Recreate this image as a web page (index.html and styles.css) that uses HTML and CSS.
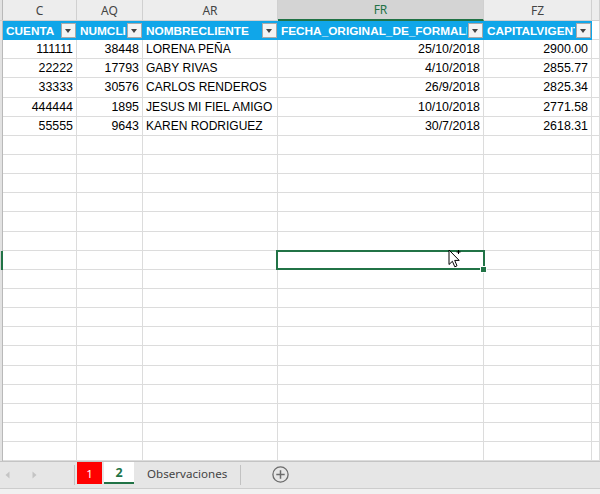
FILE: index.html
```html
<!DOCTYPE html>
<html lang="es">
<head>
    <meta charset="UTF-8">
    <meta name="viewport" content="width=device-width, initial-scale=1.0">
    <title>Libro1 - Excel</title>
    <link rel="stylesheet" href="styles.css">
</head>
<body>

    <div class="sheet">

        <!-- Column letters -->
        <div class="colheads">
            <div class="corner"></div>
            <div class="ch">C</div>
            <div class="ch">AQ</div>
            <div class="ch">AR</div>
            <div class="ch ch-active">FR</div>
            <div class="ch">FZ</div>
            <div class="ch"></div>
        </div>

        <!-- Cells -->
        <div class="grid">
            <div class="row">
                <div class="rh"></div>
                <div class="th"><span class="th-text">CUENTA</span><span class="filter"></span></div>
                <div class="th"><span class="th-text">NUMCLIENTE</span><span class="filter"></span></div>
                <div class="th"><span class="th-text">NOMBRECLIENTE</span><span class="filter"></span></div>
                <div class="th"><span class="th-text">FECHA_ORIGINAL_DE_FORMALIZACION</span><span class="filter"></span></div>
                <div class="th"><span class="th-text">CAPITALVIGENTE</span><span class="filter"></span></div>
                <div class="cell"></div>
            </div>
            <div class="row">
                <div class="rh"></div>
                <div class="cell num">111111</div>
                <div class="cell num">38448</div>
                <div class="cell">LORENA PEÑA</div>
                <div class="cell num">25/10/2018</div>
                <div class="cell num">2900.00</div>
                <div class="cell"></div>
            </div>
            <div class="row">
                <div class="rh"></div>
                <div class="cell num">22222</div>
                <div class="cell num">17793</div>
                <div class="cell">GABY RIVAS</div>
                <div class="cell num">4/10/2018</div>
                <div class="cell num">2855.77</div>
                <div class="cell"></div>
            </div>
            <div class="row">
                <div class="rh"></div>
                <div class="cell num">33333</div>
                <div class="cell num">30576</div>
                <div class="cell">CARLOS RENDEROS</div>
                <div class="cell num">26/9/2018</div>
                <div class="cell num">2825.34</div>
                <div class="cell"></div>
            </div>
            <div class="row">
                <div class="rh"></div>
                <div class="cell num">444444</div>
                <div class="cell num">1895</div>
                <div class="cell">JESUS MI FIEL AMIGO</div>
                <div class="cell num">10/10/2018</div>
                <div class="cell num">2771.58</div>
                <div class="cell"></div>
            </div>
            <div class="row">
                <div class="rh"></div>
                <div class="cell num">55555</div>
                <div class="cell num">9643</div>
                <div class="cell">KAREN RODRIGUEZ</div>
                <div class="cell num">30/7/2018</div>
                <div class="cell num">2618.31</div>
                <div class="cell"></div>
            </div>
            <div class="row"><div class="rh"></div><div class="cell"></div><div class="cell"></div><div class="cell"></div><div class="cell"></div><div class="cell"></div><div class="cell"></div></div>
            <div class="row"><div class="rh"></div><div class="cell"></div><div class="cell"></div><div class="cell"></div><div class="cell"></div><div class="cell"></div><div class="cell"></div></div>
            <div class="row"><div class="rh"></div><div class="cell"></div><div class="cell"></div><div class="cell"></div><div class="cell"></div><div class="cell"></div><div class="cell"></div></div>
            <div class="row"><div class="rh"></div><div class="cell"></div><div class="cell"></div><div class="cell"></div><div class="cell"></div><div class="cell"></div><div class="cell"></div></div>
            <div class="row"><div class="rh"></div><div class="cell"></div><div class="cell"></div><div class="cell"></div><div class="cell"></div><div class="cell"></div><div class="cell"></div></div>
            <div class="row"><div class="rh"></div><div class="cell"></div><div class="cell"></div><div class="cell"></div><div class="cell"></div><div class="cell"></div><div class="cell"></div></div>
            <!-- Active row -->
            <div class="row">
                <div class="rh rh-active"></div>
                <div class="cell"></div>
                <div class="cell"></div>
                <div class="cell"></div>
                <div class="cell selected">
                    <svg class="cursor" width="14" height="20" viewBox="0 0 14 20">
                        <path d="M1 1 L1 15.5 L4.4 12.3 L6.8 17.8 L9 16.8 L6.7 11.4 L11.2 11.4 Z" fill="#fff" stroke="#000" stroke-width="1"/>
                        <path d="M10.5 1 V5 M8.5 3 H12.5" stroke="#000" stroke-width="1"/>
                    </svg>
                </div>
                <div class="cell"></div>
                <div class="cell"></div>
            </div>
            <div class="row"><div class="rh"></div><div class="cell"></div><div class="cell"></div><div class="cell"></div><div class="cell"></div><div class="cell"></div><div class="cell"></div></div>
            <div class="row"><div class="rh"></div><div class="cell"></div><div class="cell"></div><div class="cell"></div><div class="cell"></div><div class="cell"></div><div class="cell"></div></div>
            <div class="row"><div class="rh"></div><div class="cell"></div><div class="cell"></div><div class="cell"></div><div class="cell"></div><div class="cell"></div><div class="cell"></div></div>
            <div class="row"><div class="rh"></div><div class="cell"></div><div class="cell"></div><div class="cell"></div><div class="cell"></div><div class="cell"></div><div class="cell"></div></div>
            <div class="row"><div class="rh"></div><div class="cell"></div><div class="cell"></div><div class="cell"></div><div class="cell"></div><div class="cell"></div><div class="cell"></div></div>
            <div class="row"><div class="rh"></div><div class="cell"></div><div class="cell"></div><div class="cell"></div><div class="cell"></div><div class="cell"></div><div class="cell"></div></div>
            <div class="row"><div class="rh"></div><div class="cell"></div><div class="cell"></div><div class="cell"></div><div class="cell"></div><div class="cell"></div><div class="cell"></div></div>
            <div class="row"><div class="rh"></div><div class="cell"></div><div class="cell"></div><div class="cell"></div><div class="cell"></div><div class="cell"></div><div class="cell"></div></div>
            <div class="row"><div class="rh"></div><div class="cell"></div><div class="cell"></div><div class="cell"></div><div class="cell"></div><div class="cell"></div><div class="cell"></div></div>
            <div class="row"><div class="rh"></div><div class="cell"></div><div class="cell"></div><div class="cell"></div><div class="cell"></div><div class="cell"></div><div class="cell"></div></div>
        </div>

        <!-- Sheet tabs -->
        <div class="tabbar">
            <div class="nav">
                <svg width="5" height="8" viewBox="0 0 5 8"><path d="M4.5 0.5 L0.5 4 L4.5 7.5 Z" fill="#c4c4c4"/></svg>
                <svg width="5" height="8" viewBox="0 0 5 8"><path d="M0.5 0.5 L4.5 4 L0.5 7.5 Z" fill="#c4c4c4"/></svg>
            </div>
            <div class="sep"></div>
            <div class="tab tab-red">1</div>
            <div class="tab tab-active">2</div>
            <div class="tab">Observaciones</div>
            <div class="sep"></div>
            <div class="add">
                <svg width="17" height="17" viewBox="0 0 17 17">
                    <circle cx="8.5" cy="8.5" r="7.6" fill="none" stroke="#6b6b6b" stroke-width="1.3"/>
                    <path d="M8.5 4.3 V12.7 M4.3 8.5 H12.7" stroke="#6b6b6b" stroke-width="1.5"/>
                </svg>
            </div>
        </div>
        <div class="statusline"></div>

    </div>

</body>
</html>
```

FILE: styles.css
```css
body {
    margin: 0;
    padding: 0;
    background-color: #fff;
    font-family: "Liberation Sans", Arial, sans-serif;
    overflow: hidden;
}

.sheet {
    width: 600px;
    height: 494px;
    display: flex;
    flex-direction: column;
}

/* Column letters */
.colheads {
    display: grid;
    grid-template-columns: 3px 74px 66px 135px 206px 108px 1fr;
    height: 21px;
    flex-shrink: 0;
    background-color: #ededed;
    border-bottom: 1px solid #cfcfcf;
    box-sizing: border-box;
}

.corner {
    background-color: #e2e2e2;
    border-right: 1px solid #b9b9b9;
}

.ch {
    font-family: "Noto Sans", sans-serif;
    font-size: 12px;
    color: #444;
    display: flex;
    align-items: center;
    justify-content: center;
    border-right: 1px solid #d0d0d0;
}

.ch-active {
    background-color: #d4d4d4;
    color: #217346;
    border-bottom: 2px solid #217346;
    margin-bottom: -1px;
}

/* Grid */
.grid {
    height: 440px;
    flex-shrink: 0;
    overflow: hidden;
}

.row {
    display: grid;
    grid-template-columns: 3px 74px 66px 135px 206px 108px 1fr;
    height: 19.15px;
}

.rh {
    background-color: #e2e2e2;
    border-right: 1px solid #b9b9b9;
}

.rh-active {
    border-right: 2px solid #217346;
    background-color: #d4d4d4;
}

.cell {
    font-size: 12px;
    color: #000;
    padding: 0 3px;
    display: flex;
    align-items: center;
    white-space: nowrap;
    overflow: hidden;
    border-right: 1px solid #dcdcdc;
    border-bottom: 1px solid #dcdcdc;
    box-sizing: border-box;
}

.num {
    justify-content: flex-end;
    font-size: 12.4px;
}

/* Table header */
.th {
    background-color: #10a6e9;
    color: #fff;
    font-weight: bold;
    font-size: 11.8px;
    padding: 0 1px 0 3px;
    display: flex;
    align-items: center;
    gap: 1px;
    white-space: nowrap;
    overflow: hidden;
}

.th-text {
    flex: 1;
    min-width: 0;
    overflow: hidden;
}

.filter {
    position: relative;
    flex-shrink: 0;
    width: 15px;
    height: 15px;
    box-sizing: border-box;
    background-color: #f3f3f3;
    border: 1px solid #a9a9a9;
}

.filter::after {
    content: "";
    position: absolute;
    left: 3px;
    top: 5px;
    border-left: 3.5px solid transparent;
    border-right: 3.5px solid transparent;
    border-top: 4px solid #444;
}

/* Active cell */
.selected {
    position: relative;
    overflow: visible;
}

.selected::before {
    content: "";
    position: absolute;
    left: -2px;
    top: -1px;
    right: -2px;
    bottom: -1px;
    border: 2px solid #217346;
}

.selected::after {
    content: "";
    position: absolute;
    right: -4px;
    bottom: -4px;
    width: 5px;
    height: 5px;
    background-color: #217346;
    border: 1px solid #fff;
}

.cursor {
    position: absolute;
    left: 170px;
    top: -2px;
    z-index: 2;
}

/* Sheet tabs */
.tabbar {
    height: 27px;
    flex-shrink: 0;
    background-color: #e6e6e6;
    border-top: 1px solid #c4c4c4;
    box-sizing: border-box;
    display: flex;
    align-items: flex-start;
    font-family: "Noto Sans", sans-serif;
}

.nav {
    width: 74px;
    height: 25px;
    display: flex;
    align-items: center;
    gap: 22px;
    padding-left: 5px;
    box-sizing: border-box;
}

.sep {
    width: 1px;
    height: 20px;
    margin-top: 3px;
    background-color: #c2c2c2;
}

.tab {
    height: 22px;
    box-sizing: border-box;
    padding: 0 13px;
    display: flex;
    align-items: center;
    font-size: 11.6px;
    color: #444;
}

.tab-red {
    width: 25px;
    margin-left: 2px;
    padding: 0;
    justify-content: center;
    background-color: #ff0000;
    color: #fff;
}

.tab-active {
    width: 30px;
    margin-left: 2px;
    padding: 0;
    justify-content: center;
    background-color: #fff;
    color: #217346;
    font-weight: bold;
    font-size: 12.5px;
    border-bottom: 2px solid #217346;
}

.add {
    margin-left: 31px;
    height: 25px;
    display: flex;
    align-items: center;
}

.statusline {
    flex: 1;
    background-color: #f1f1f1;
    border-top: 1px solid #cdcdcd;
}
```
